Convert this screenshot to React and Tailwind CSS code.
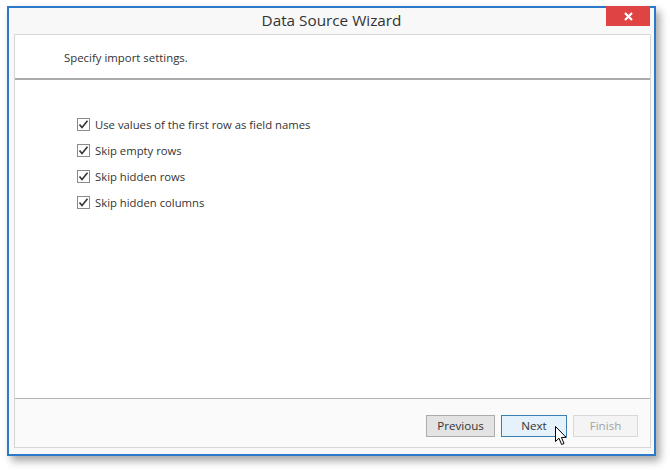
import React from 'react';

const options = [
  'Use values of the first row as field names',
  'Skip empty rows',
  'Skip hidden rows',
  'Skip hidden columns',
];

function CheckBox() {
  return (
    <span className="flex h-[13px] w-[13px] shrink-0 items-center justify-center border border-[#8a8a8a] bg-white">
      <svg width="11" height="11" viewBox="0 0 11 11">
        <path d="M1.5 5.5 L4 8.5 L9.5 1.8" fill="none" stroke="#333" strokeWidth="1.6" />
      </svg>
    </span>
  );
}

function Cursor() {
  return (
    <svg className="absolute left-[53px] top-[10px]" width="13" height="20" viewBox="0 0 13 20">
      <path
        d="M0.5 0.5 L0.5 15.5 L4 12.2 L6.6 18.5 L9 17.5 L6.4 11.4 L11.2 11.4 Z"
        fill="white"
        stroke="black"
        strokeWidth="1"
        strokeLinejoin="miter"
      />
    </svg>
  );
}

export default function App() {
  return (
    <div className="h-[470px] w-[670px] bg-white pl-[7px] pt-[6px] text-[#333] [font-family:'Segoe_UI','Open_Sans',sans-serif]">
      <div className="flex h-[450px] w-[649px] flex-col border-2 border-[#2b79c8] bg-[#f8f8f8] shadow-[4px_5px_8px_rgba(0,0,0,0.35)]">
        {/* Title bar */}
        <div className="relative flex h-[26px] items-center justify-center pb-[1px]">
          <span className="text-[15.3px] leading-none text-[#333]">Data Source Wizard</span>
          <button className="absolute right-[4px] top-[-2px] flex h-[20px] w-[44px] items-center justify-center bg-[#e04343]">
            <svg width="9" height="9" viewBox="0 0 9 9">
              <path d="M1 1 L8 8 M8 1 L1 8" stroke="white" strokeWidth="2.2" />
            </svg>
          </button>
        </div>

        {/* Panel */}
        <div className="ml-[5px] flex h-[414px] w-[637px] flex-col border border-[#d6d6d6] bg-white">
          <div className="flex h-[45px] items-center border-b-2 border-[#ababab] pl-[49px] pt-[2px] text-[11.4px]">
            Specify import settings.
          </div>

          <div className="flex flex-1 flex-col gap-[13px] pl-[62px] pt-[38px]">
            {options.map((label) => (
              <label key={label} className="flex h-[13px] items-center gap-[5px] text-[11.3px] leading-none">
                <CheckBox />
                <span className="pt-[1px]">{label}</span>
              </label>
            ))}
          </div>

          <div className="flex h-[49px] items-start justify-end gap-[6px] border-t border-[#b4b4b4] bg-[#fafafa] pr-[12px] pt-[16px] text-[11.6px]">
            <button className="h-[22px] w-[69px] border border-[#acacac] bg-[#e3e3e3] text-[#333]">Previous</button>
            <button className="relative h-[22px] w-[66px] border border-[#3c7fb1] bg-[#e5f1fb] text-[#333]">
              Next
              <Cursor />
            </button>
            <button className="h-[22px] w-[65px] border border-[#d9d9d9] bg-[#f4f4f4] text-[#a3a3a3]">Finish</button>
          </div>
        </div>
      </div>
    </div>
  );
}
